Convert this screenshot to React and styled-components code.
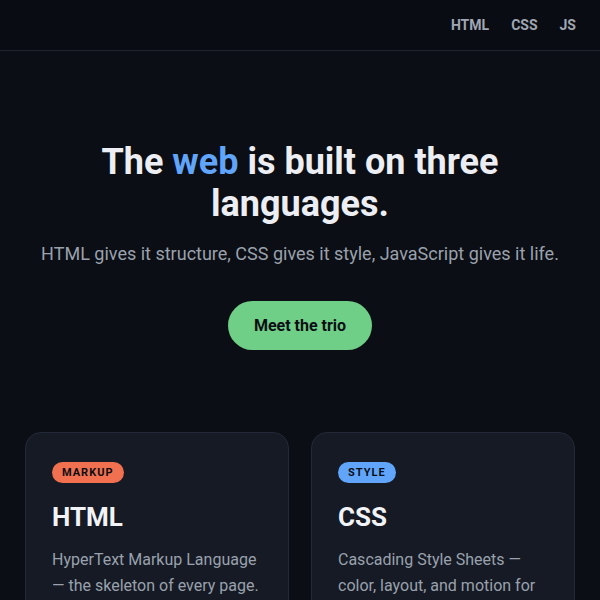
import React from "react";
import styled, { createGlobalStyle } from "styled-components";

const Global = createGlobalStyle`
  html, body { margin: 0; padding: 0; background: #0b0e14; }
  body { font-family: Roboto, "Noto Sans", "Liberation Sans", sans-serif; color: #e6e9ef; }
  * { box-sizing: border-box; }
`;

const Page = styled.div`
  min-height: 600px;
  background: #0b0e14;
`;

const Header = styled.header`
  height: 51px;
  border-bottom: 1px solid #1f2430;
  display: flex;
  align-items: center;
  justify-content: flex-end;
  padding: 0 24px;
  background: #090c12;
`;

const Nav = styled.nav`
  display: flex;
  gap: 22px;
`;

const NavLink = styled.a`
  font-size: 14px;
  font-weight: 700;
  color: #a0a6b2;
  text-decoration: none;
`;

const Hero = styled.section`
  padding: 90px 24px 0;
  text-align: center;
`;

const Title = styled.h1`
  margin: 0 auto;
  max-width: 460px;
  font-size: 36px;
  line-height: 42px;
  font-weight: 700;
  color: #eceef3;
`;

const Accent = styled.span`
  color: #60a5fa;
`;

const Lead = styled.p`
  margin: 15px 0 0;
  font-size: 18px;
  line-height: 28px;
  color: #9aa1ad;
`;

const Cta = styled.button`
  margin-top: 33px;
  height: 49px;
  padding: 0 26px;
  border: none;
  border-radius: 999px;
  background: #6fcf87;
  color: #0b0e14;
  font-family: inherit;
  font-size: 16px;
  font-weight: 700;
`;

const Cards = styled.section`
  margin-top: 82px;
  padding: 0 25px;
  display: grid;
  grid-template-columns: 1fr 1fr;
  gap: 22px;
`;

const Card = styled.article`
  background: #151a24;
  border: 1px solid #232937;
  border-radius: 16px;
  padding: 28px 26px 26px;
  height: 200px;
`;

const Badge = styled.span`
  display: inline-block;
  height: 21px;
  line-height: 21px;
  padding: 0 10px;
  border-radius: 999px;
  background: ${(p) => p.$bg};
  color: #0b0e14;
  font-size: 11px;
  font-weight: 700;
  letter-spacing: 1px;
`;

const CardTitle = styled.h2`
  margin: 18px 0 0;
  font-size: 26px;
  line-height: 32px;
  font-weight: 700;
  color: #f1f3f7;
`;

const CardText = styled.p`
  margin: 14px 0 0;
  font-size: 16px;
  line-height: 26px;
  color: #9aa1ad;
`;

const cards = [
  { badge: "MARKUP", color: "#f0704f", title: "HTML", text: "HyperText Markup Language — the skeleton of every page." },
  { badge: "STYLE", color: "#60a5fa", title: "CSS", text: "Cascading Style Sheets — color, layout, and motion for every element." },
];

export default function App() {
  return (
    <Page>
      <Global />
      <Header>
        <Nav>
          <NavLink href="#">HTML</NavLink>
          <NavLink href="#">CSS</NavLink>
          <NavLink href="#">JS</NavLink>
        </Nav>
      </Header>
      <Hero>
        <Title>
          The <Accent>web</Accent> is built on three languages.
        </Title>
        <Lead>HTML gives it structure, CSS gives it style, JavaScript gives it life.</Lead>
        <Cta>Meet the trio</Cta>
      </Hero>
      <Cards>
        {cards.map((c) => (
          <Card key={c.title}>
            <Badge $bg={c.color}>{c.badge}</Badge>
            <CardTitle>{c.title}</CardTitle>
            <CardText>{c.text}</CardText>
          </Card>
        ))}
      </Cards>
    </Page>
  );
}
